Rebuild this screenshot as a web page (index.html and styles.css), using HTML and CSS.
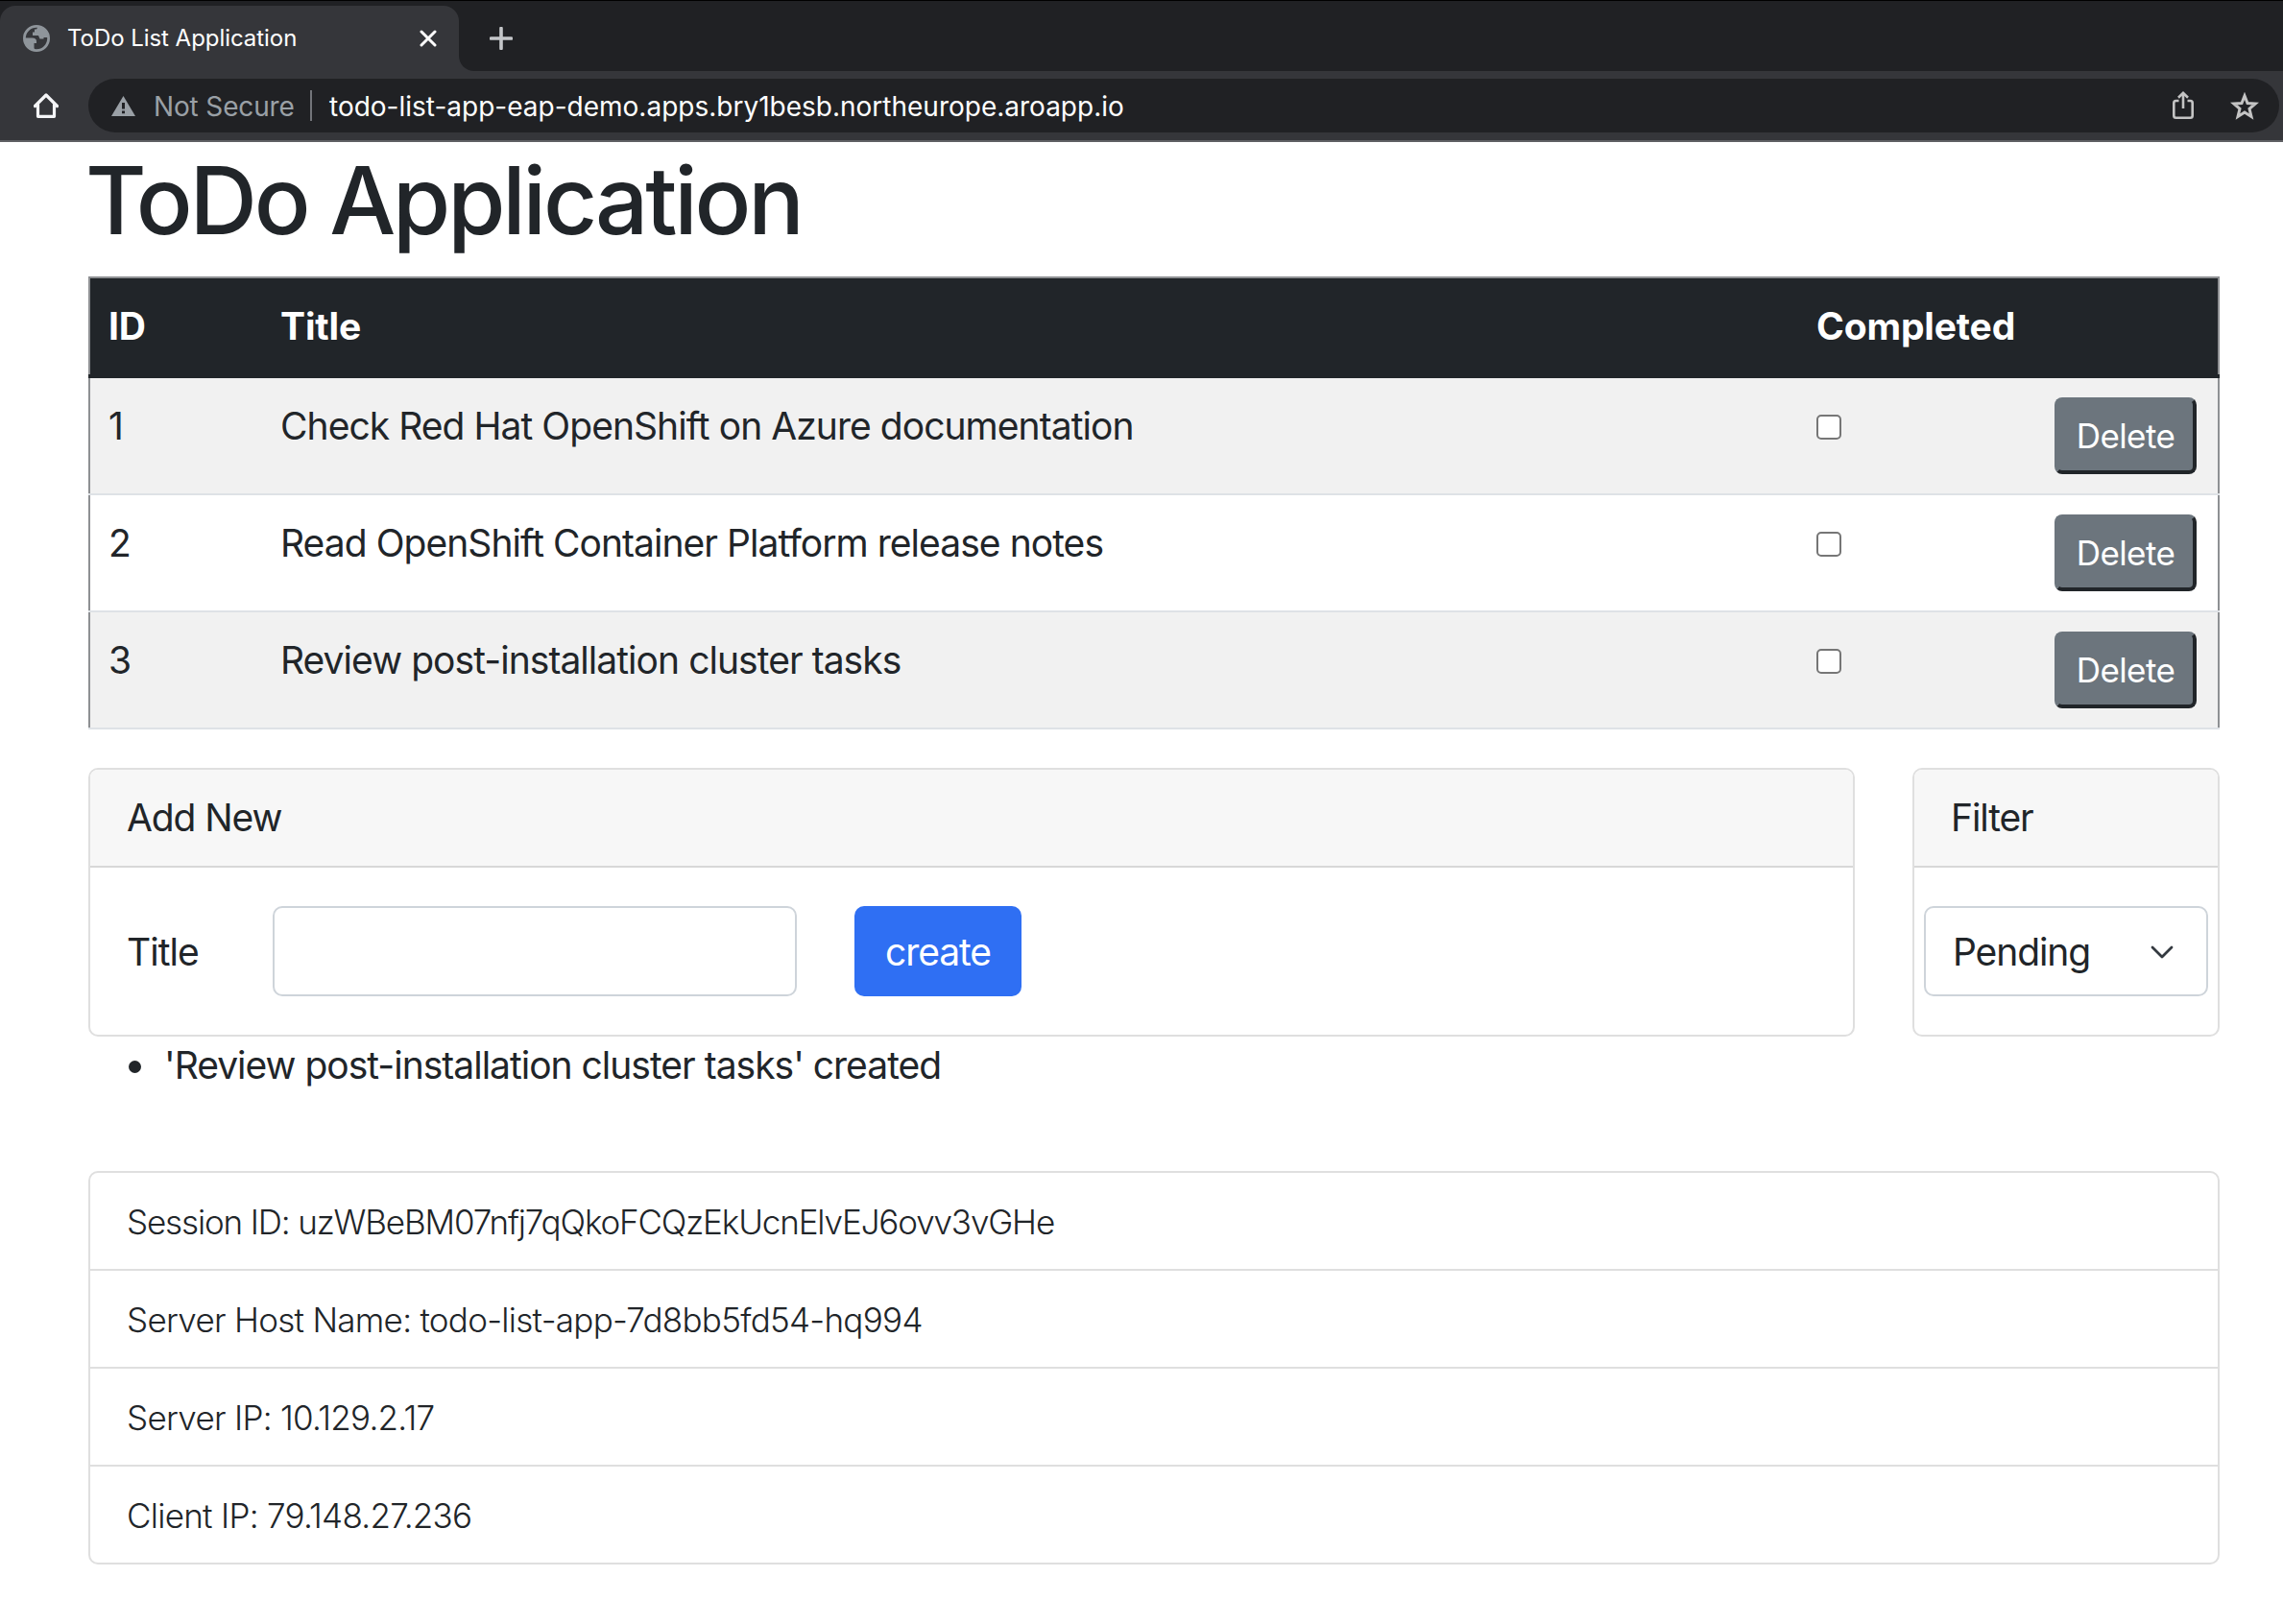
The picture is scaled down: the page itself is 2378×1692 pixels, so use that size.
FILE: index.html
```html
<!DOCTYPE html>
<html lang="en">
<head>
<meta charset="utf-8">
<title>ToDo List Application</title>
<link rel="stylesheet" href="styles.css">
</head>
<body>
<header class="browser">
  <div class="tabstrip">
    <div class="tab">
      <svg class="favicon" viewBox="0 0 28 28"><circle cx="14" cy="14" r="12.6" fill="none" stroke="#8f959b" stroke-width="2.8"/><path fill="#8f959b" d="M1 13.500H9.500C12.500 13.500 14 15 14 17V19H11.500V24L13 27C6 27 1 21 1 13.500ZM15.500 2 14 4.500H12V7.500H10V11H16L17.500 14.500H21.500V13H26.500C27 7 22 2 15.500 2Z"/></svg>
      <span class="tab-title">ToDo List Application</span>
      <svg class="tab-close" viewBox="0 0 18 18"><path d="M2 2 16 16M16 2 2 16" stroke="#fff" stroke-width="3" stroke-linecap="round"/></svg>
    </div>
    <svg class="tab-curve" viewBox="0 0 16 16"><path d="M0 0C0 9 7 16 16 16H0Z" fill="#35363a"/></svg>
    <svg class="new-tab" viewBox="0 0 24 24"><path d="M12 1.500V22.500M1.500 12H22.500" stroke="#c4c6c9" stroke-width="3.600" stroke-linecap="round"/></svg>
  </div>
  <div class="toolbar">
    <svg class="home" viewBox="0 0 26 26"><path d="M1.500 13.500 13 2 24.500 13.500M4.500 12V24.300H21.500V12" fill="none" stroke="#f4f5f7" stroke-width="3.200" stroke-linejoin="round" stroke-linecap="round"/></svg>
    <div class="address">
      <svg class="warning" viewBox="0 0 25 21"><path fill="#9aa0a6" fill-rule="evenodd" d="M12.500 0 25 21H0ZM11 7V13.500H14V7ZM11 15.500V18.300H14V15.500Z"/></svg>
      <span class="not-secure">Not Secure</span>
      <span class="divider"></span>
      <span class="url">todo-list-app-eap-demo.apps.bry1besb.northeurope.aroapp.io</span>
      <svg class="share" viewBox="0 0 22 30"><path d="M6.500 10H3.500Q1.300 10 1.300 12.200V25.500Q1.300 27.700 3.500 27.700H18.500Q20.700 27.700 20.700 25.500V12.200Q20.700 10 18.500 10H15.500M11 18V2.500M6 6.800 11 1.900 16 6.800" fill="none" stroke="#c4c4c4" stroke-width="2.600"/></svg>
      <svg class="star" viewBox="0 0 30 29"><path d="M15 3.800 18 11.500 26.300 12 20 17.400 22 25.500 15 21 8 25.500 10 17.400 3.700 12 12 11.500Z" fill="none" stroke="#c4c4c4" stroke-width="3"/></svg>
    </div>
  </div>
</header>
<main class="container">
  <h1 class="heading">ToDo Application</h1>
  <table class="todos">
    <colgroup><col class="col-id"><col class="col-title"><col class="col-done"><col class="col-action"></colgroup>
    <thead><tr><th>ID</th><th>Title</th><th>Completed</th><th></th></tr></thead>
    <tbody>
      <tr><td>1</td><td>Check Red Hat OpenShift on Azure documentation</td><td><input class="check" type="checkbox"></td><td><button class="delete">Delete</button></td></tr>
      <tr><td>2</td><td>Read OpenShift Container Platform release notes</td><td><input class="check" type="checkbox"></td><td><button class="delete">Delete</button></td></tr>
      <tr><td>3</td><td>Review post-installation cluster tasks</td><td><input class="check" type="checkbox"></td><td><button class="delete">Delete</button></td></tr>
    </tbody>
  </table>
  <div class="panels">
    <section class="card">
      <div class="card-header">Add New</div>
      <form class="card-body">
        <label class="label" for="title">Title</label>
        <input class="input" id="title" type="text">
        <button class="create" type="button">create</button>
      </form>
    </section>
    <section class="card card-filter">
      <div class="card-header">Filter</div>
      <div class="card-body">
        <div class="select"><span>Pending</span><svg class="chevron" viewBox="0 0 24 15"><path d="M2 2 12 12 22 2" fill="none" stroke="#343a40" stroke-width="2.800" stroke-linecap="round" stroke-linejoin="round"/></svg></div>
      </div>
    </section>
  </div>
  <ul class="messages"><li class="message">'Review post-installation cluster tasks' created</li></ul>
  <ul class="info">
    <li class="session">Session ID: uzWBeBM07nfj7qQkoFCQzEkUcnElvEJ6ovv3vGHe</li>
    <li>Server Host Name: todo-list-app-7d8bb5fd54-hq994</li>
    <li>Server IP: 10.129.2.17</li>
    <li>Client IP: 79.148.27.236</li>
  </ul>
</main>
</body>
</html>
```
FILE: styles.css
```css
* { box-sizing: border-box; }
body { margin: 0; height: 1692px; overflow: hidden; background: #fff; color: #212529; font: 400 39px/60px Inter, "Liberation Sans", sans-serif; letter-spacing: -0.95px; }
svg { display: block; flex: none; }

/* Browser window */
.browser { height: 148px; background: #35363a; border-bottom: 2px solid #5f6064; letter-spacing: 0; }
.tabstrip { display: flex; height: 74px; padding-top: 5px; background: #202124; border-top: 1px solid #000; }
.tab { display: flex; align-items: center; width: 478px; padding: 0 23px 0 24px; background: #35363a; border-radius: 16px 16px 0 0; }
.favicon { width: 28px; height: 28px; }
.tab-title { flex: 1; margin-left: 18px; color: #fff; font-size: 24px; line-height: 30px; letter-spacing: -0.05px; white-space: nowrap; }
.tab-close { width: 18px; height: 18px; }
.tab-curve { width: 16px; height: 16px; align-self: flex-end; }
.new-tab { width: 24px; height: 24px; margin: 22px 0 0 16px; }
.toolbar { display: flex; align-items: center; height: 72px; padding: 0 4px 0 35px; }
.home { width: 26px; height: 26px; }
.address { display: flex; flex: 1; align-items: center; height: 56px; margin-left: 31px; padding: 0 21px 0 24px; background: #202124; border-radius: 28px; font-size: 28px; line-height: 36px; }
.warning { width: 25px; height: 21px; }
.not-secure { width: 161px; margin-left: 19px; padding-top: 1px; color: #9aa0a6; letter-spacing: -0.15px; white-space: nowrap; }
.divider { width: 2px; height: 32px; margin-left: 2px; background: #73757a; }
.url { flex: 1; margin-left: 18px; padding-top: 1px; color: #fff; white-space: nowrap; }
.share { width: 22px; height: 30px; margin-right: 38px; }
.star { width: 30px; height: 29px; }

/* Page */
.container { padding: 0 66px 0 92px; }
.heading { height: 140px; margin: 0 0 0 -3px; padding-top: 1px; font-size: 97.5px; font-weight: 500; line-height: 120px; letter-spacing: -3.2px; white-space: nowrap; }

.todos { width: 2220px; border-collapse: collapse; table-layout: fixed; border: 2px solid #8e9093; }
.col-id { width: 179px; }
.col-done { width: 248px; }
.col-action { width: 191px; }
.todos th { height: 103px; padding: 20px 20px 18px; background: #212529; color: #fff; border-bottom: 4px solid #212529; font-weight: 700; letter-spacing: -0.15px; text-align: left; vertical-align: top; }
.todos td { height: 122px; padding: 20px; vertical-align: top; border-bottom: 2px solid #dee2e6; }
.todos tbody tr:first-child td { height: 123px; }
.todos th:first-child, .todos td:first-child { padding-left: 19px; }
.todos tbody tr:nth-child(odd) { background: #f1f1f1; }
.check { display: block; appearance: none; width: 26px; height: 26px; margin: 18px 0 0; background: #fff; border: 2px solid #767676; border-radius: 5px; }
.delete { display: block; width: 148px; height: 80px; padding: 0 0 1px; background: #6c757d; color: #fff; border: 4px solid #212529; border-top-color: #6c757d; border-left-color: #6c757d; border-radius: 8px; font: 400 35px/54px Inter, sans-serif; letter-spacing: -0.6px; }

.panels { display: flex; gap: 60px; margin-top: 40px; }
.card { flex: 1; height: 280px; border: 2px solid #dfdfdf; border-radius: 10px; overflow: hidden; }
.card-filter { flex: 0 0 320px; }
.card-header { height: 102px; padding: 20px 38px; background: #f7f7f7; border-bottom: 2px solid #d8d8d8; letter-spacing: -1.1px; }
.card-body { display: flex; align-items: center; padding: 40px 40px 40px 38px; }
.label { width: 152px; padding-top: 2px; }
.input { width: 546px; height: 94px; border: 2px solid #ced4da; border-radius: 10px; }
.create { width: 174px; height: 94px; margin-left: 60px; padding: 2px 0 0; background: #2f6ff3; color: #fff; border: 0; border-radius: 10px; font: inherit; letter-spacing: -1.1px; }
.card-filter .card-body { padding: 40px 10px; }
.select { display: flex; flex: 1; align-items: center; justify-content: space-between; height: 94px; padding: 2px 34px 0 28px; border: 2px solid #ced4da; border-radius: 10px; letter-spacing: -1.1px; }
.chevron { width: 24px; height: 15px; }

.messages { margin: 0; padding: 0; list-style: none; height: 140px; }
.message { display: flex; align-items: center; gap: 24px; padding-left: 42px; letter-spacing: -1px; }
.message::before { content: ""; width: 13px; height: 13px; margin-top: 3px; border-radius: 50%; background: #212529; }

.info { margin: 0; padding: 0; list-style: none; border: 2px solid #dfdfdf; border-radius: 10px; font-size: 35px; font-weight: 300; letter-spacing: -0.72px; }
.info li { height: 102px; padding: 21px 38px; border-bottom: 2px solid #dfdfdf; }
.info li:last-child { height: 100px; border-bottom: 0; }
.info .session { letter-spacing: -1.14px; }
```
